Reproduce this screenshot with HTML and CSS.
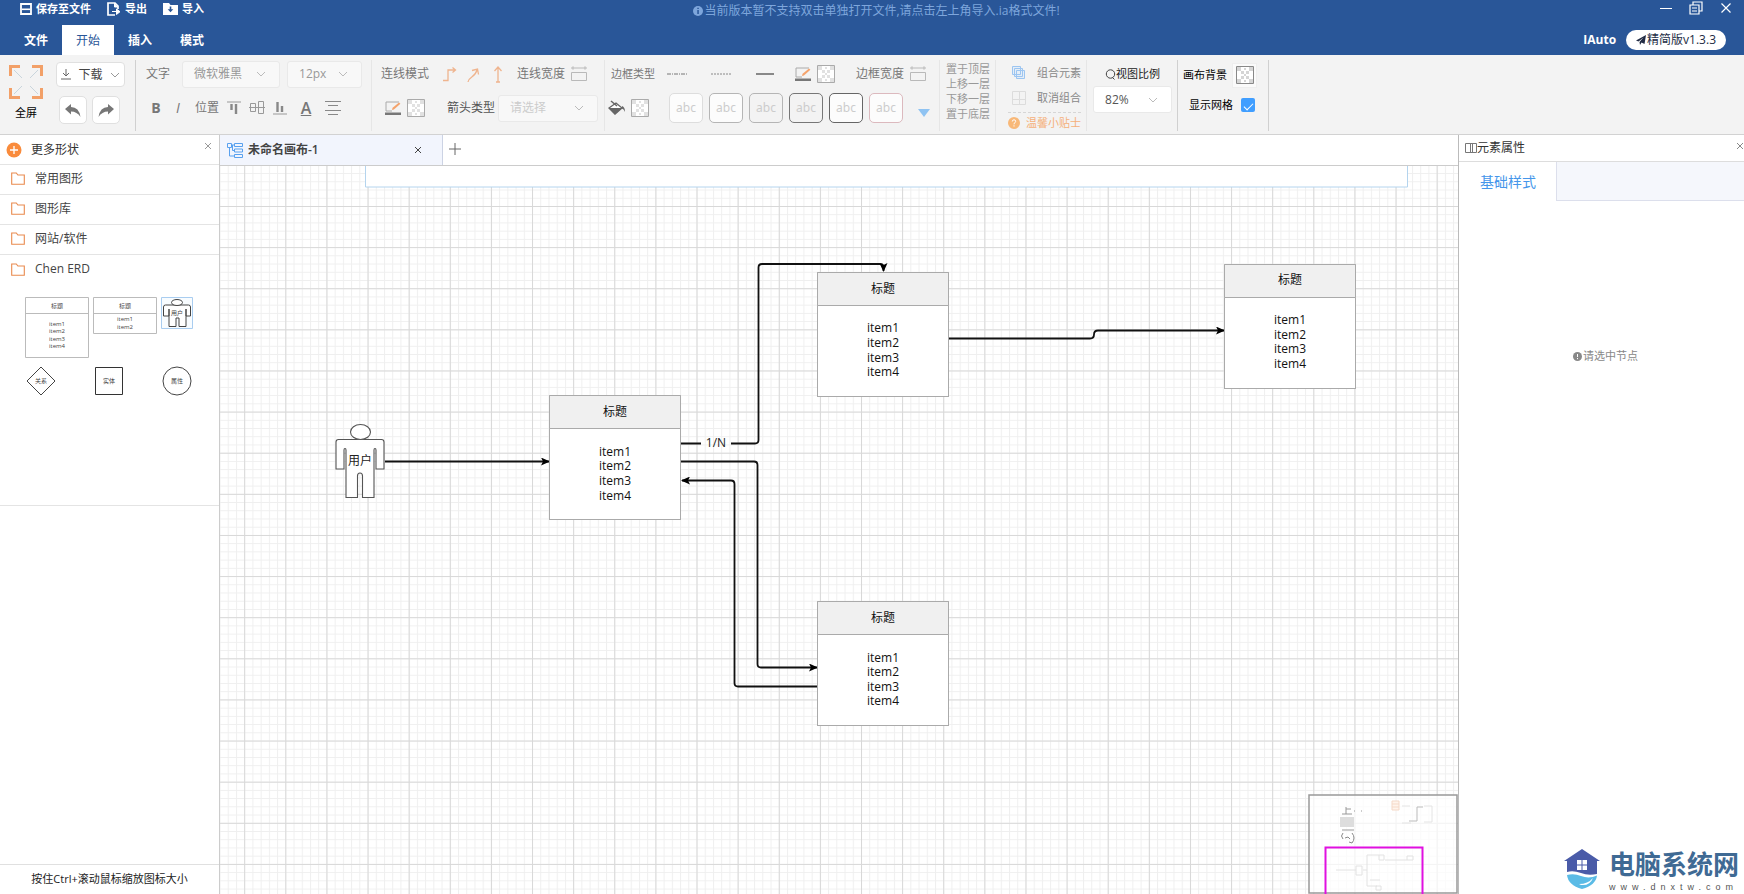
FILE: index.html
```html
<!DOCTYPE html>
<html lang="zh-CN">
<head>
<meta charset="utf-8">
<title>IAuto</title>
<link rel="stylesheet" href="styles.css">
</head>
<body>
<svg class="defs" aria-hidden="true">
  <symbol id="chevron" viewBox="0 0 10 6"><path d="M1 1l4 4 4-4" fill="none" stroke="currentColor"/></symbol>
  <symbol id="close" viewBox="0 0 8 8"><path d="M1 1l6 6M7 1L1 7" fill="none" stroke="currentColor"/></symbol>
  <symbol id="folder" viewBox="0 0 14 13"><path d="M.7 1h4.6l1.6 2h6.4v9.3H.7z" fill="none" stroke="#e98a4e" stroke-width="1.1"/></symbol>
  <symbol id="checker" viewBox="0 0 18 18"><path d="M.5.5h17v17H.5z" fill="#fff" stroke="currentColor"/><path d="M1 1h4v4H1zM13 1h4v4h-4zM5 5h3v3H5zM10 5h3v3h-3zM8 8h2v2H8zM5 10h3v3H5zM10 10h3v3h-3zM1 13h4v4H1zM13 13h4v4h-4zM8 2h2v2H8zM8 14h2v2H8z" fill="currentColor" opacity=".35"/></symbol>
  <symbol id="pen" viewBox="0 0 17 15"><path d="M14 1H1v9h6" fill="none" stroke="#aaa"/><path d="M7 9l.6-2.2L14 1.500l1.400 1.300-6.500 5.700z" fill="#f4a36c"/><path d="M0 11.500h16V14H0z" fill="#777"/></symbol>
  <symbol id="width" viewBox="0 0 18 16"><path d="M1 2h16M3 .3v3.400M15 .3v3.400M1.500 6.500h15v8h-15z" fill="none" stroke="#b9b9b9"/></symbol>
  <symbol id="person" viewBox="0 -9 50 76"><g fill="#fff" stroke="#555" stroke-width="1.1"><path d="M1 38V11q0-2.500 2.500-2.500h43q2.500 0 2.500 2.500v27h-8V19q0-1.500-1-1.500T39 19v47.500H27.500V45q0-3-2.500-3t-2.500 3v21.500H11V19q0-1.500-1-1.500T9 19v19z"/><ellipse cx="25.500" cy="1" rx="10" ry="7.500"/></g></symbol>
  <marker id="arrow" viewBox="0 0 9 8" refX="8" refY="4" markerWidth="9" markerHeight="8" markerUnits="userSpaceOnUse" orient="auto-start-reverse"><path d="M0 0l9 4-9 4 2-4z"/></marker>
</svg>

<header class="top">
  <div class="quick">
    <div class="quick-actions">
      <button class="quick-btn"><svg width="12" height="12" viewBox="0 0 12 12"><path d="M1 1h10v10H1z" fill="none" stroke="#fff" stroke-width="1.800"/><path d="M2 5.500h8v1.600H2z" fill="#fff"/></svg>保存至文件</button>
      <button class="quick-btn"><svg width="14" height="14" viewBox="0 0 14 14"><path d="M8 13H1V1h7l3 3v3" fill="none" stroke="#fff" stroke-width="1.700"/><path d="M7.500 1v4H11M5 9.500h6M9.500 7l3.500 2.700-3.500 2.800z" fill="#fff" stroke="#fff"/></svg>导出</button>
      <button class="quick-btn"><svg width="15" height="12" viewBox="0 0 15 12"><path d="M0 0h6l1.500 2H15v10H0z" fill="#fff"/><path d="M6.700 3.500h1.600v2.700h2L7.500 9.200 4.700 6.200h2z" fill="#295698"/></svg>导入</button>
    </div>
    <p class="notice"><svg width="10" height="10" viewBox="0 0 10 10"><circle cx="5" cy="5" r="5" fill="#7ea6dc"/><path d="M4.300 1.800h1.500v1.300H4.300zM4.300 4h1.500v4H4.300z" fill="#295698"/></svg>当前版本暂不支持双击单独打开文件,请点击左上角导入.ia格式文件!</p>
    <div class="window-btns">
      <button aria-label="最小化"><svg width="14" height="14" viewBox="0 0 14 14"><path d="M1 7.500h12" stroke="#fff"/></svg></button>
      <button aria-label="还原"><svg width="14" height="14" viewBox="0 0 14 14"><path d="M1 4h9v9H1zM4 4V1h9v9h-3M3 7h5M3 10h5" fill="none" stroke="#fff" stroke-width="1.200"/></svg></button>
      <button aria-label="关闭"><svg width="14" height="14" viewBox="0 0 14 14"><path d="M2.500 2.500l9 9M11.500 2.500l-9 9" stroke="#fff" stroke-width="1.200"/></svg></button>
    </div>
  </div>
  <div class="menu-row">
    <nav class="menu">
      <button>文件</button><button class="active">开始</button><button>插入</button><button>模式</button>
    </nav>
    <div class="brand"><b>IAuto</b>
      <span class="version"><svg width="10" height="10" viewBox="0 0 10 10"><path d="M0 5.500L10 0 8.500 9 5.500 7.500 4 10 3.500 7 7.500 2.500 2.500 6.500z" fill="#222c44"/></svg>精简版v1.3.3</span>
    </div>
  </div>
</header>

<section class="ribbon">
  <div class="group file-group">
    <button class="full"><svg width="34" height="34" viewBox="0 0 34 34"><path d="M1.500 11V1.500H11M23 1.500h9.500V11M1.500 23v9.500H11M32.500 23v9.500H23" fill="none" stroke="#f2a068" stroke-width="3"/><path d="M5 5l8 8M29 5l-8 8M5 29l8-8M29 29l-8-8" stroke="#c9d5dc"/></svg>全屏</button>
    <div class="col">
      <button class="box download"><svg width="10" height="11" viewBox="0 0 10 11"><path d="M5 0v7M2 4l3 3 3-3M0 10h10" fill="none" stroke="#666"/></svg>下载<svg class="chev" width="10" height="6"><use href="#chevron"/></svg></button>
      <div class="undo">
        <button class="box" aria-label="撤销"><svg width="16" height="13" viewBox="0 0 16 13"><path d="M0 5L6 0v3q8 0 9.500 10Q12 7.500 6 7.500v3z" fill="#777"/></svg></button>
        <button class="box" aria-label="重做"><svg width="16" height="13" viewBox="0 0 16 13"><path d="M16 5l-6-5v3Q2 3 .5 13 4 7.500 10 7.500v3z" fill="#777"/></svg></button>
      </div>
    </div>
  </div>

  <div class="group text-group faded">
    <div class="row">
      <label for="font">文字</label>
      <span class="select font"><select id="font"><option>微软雅黑</option></select><svg width="10" height="6"><use href="#chevron"/></svg></span>
      <span class="select size"><select aria-label="字号"><option>12px</option></select><svg width="10" height="6"><use href="#chevron"/></svg></span>
    </div>
    <div class="row tools">
      <button class="bold">B</button><button class="italic">I</button><span>位置</span>
      <button aria-label="顶部"><svg width="14" height="14" viewBox="0 0 14 14"><path d="M0 1h14" stroke="#999"/><path d="M4.500 3v6M9 3v10" stroke="#888" stroke-width="2.400"/></svg></button>
      <button aria-label="居中"><svg width="16" height="16" viewBox="0 0 16 16"><path d="M1.500 3.500h5v8h-5zM9.500 1.500h5v12h-5zM0 7.500h16" fill="none" stroke="#999"/></svg></button>
      <button aria-label="底部"><svg width="14" height="14" viewBox="0 0 14 14"><path d="M0 13h14" stroke="#999"/><path d="M4.500 1v10M9 5v6" stroke="#888" stroke-width="2.400"/></svg></button>
      <button class="color">A</button>
      <button aria-label="对齐"><svg width="16" height="16" viewBox="0 0 16 16"><path d="M0 1.500h16M3 5.500h10M0 10.500h16M3 14.500h10" stroke="#888"/></svg></button>
    </div>
  </div>

  <div class="group line-group faded">
    <div class="row">
      <span>连线模式</span>
      <div class="modes">
        <button aria-label="折线"><svg width="16" height="17" viewBox="0 0 16 17"><path d="M1 14.500h5V4h7M10.500 1.500L13.500 4l-3 2.500" fill="none" stroke="#efb48e" stroke-width="1.300"/></svg></button>
        <button aria-label="曲线"><svg width="16" height="17" viewBox="0 0 16 17"><path d="M2 16c1-6 7-4 9-12M6 4.500l5.500-1.500 1 5.500" fill="none" stroke="#efb48e" stroke-width="1.300"/></svg></button>
        <button aria-label="直线"><svg width="16" height="17" viewBox="0 0 16 17"><path d="M8 16V1M4.500 5L8 1l3.500 4M6 16h4" fill="none" stroke="#efb48e" stroke-width="1.300"/></svg></button>
      </div>
      <span>连线宽度</span>
      <svg class="w" width="18" height="16"><use href="#width"/></svg>
    </div>
    <div class="row">
      <button class="pen" aria-label="线条颜色"><svg width="17" height="15"><use href="#pen"/></svg></button>
      <button class="chk" aria-label="无颜色"><svg width="18" height="18"><use href="#checker"/></svg></button>
      <label for="arrowtype" class="dark">箭头类型</label>
      <span class="select arrow"><select id="arrowtype"><option>请选择</option></select><svg width="10" height="6"><use href="#chevron"/></svg></span>
    </div>
  </div>

  <div class="group border-group faded">
    <div class="row">
      <span class="small">边框类型</span>
      <div class="dashes">
        <button aria-label="虚线"><svg width="20" height="2"><path d="M0 1h20" stroke="#777" stroke-dasharray="4 1 1 1"/></svg></button>
        <button aria-label="点线"><svg width="20" height="2"><path d="M0 1h20" stroke="#888" stroke-dasharray="2 1"/></svg></button>
        <button aria-label="实线"><svg width="20" height="2"><path d="M1 1h18" stroke="#888" stroke-width="2"/></svg></button>
      </div>
      <button class="pen" aria-label="边框颜色"><svg width="17" height="15"><use href="#pen"/></svg></button>
      <button class="chk" aria-label="无颜色"><svg width="18" height="18"><use href="#checker"/></svg></button>
      <span class="bw">边框宽度</span>
      <svg class="w" width="18" height="16"><use href="#width"/></svg>
    </div>
    <div class="row">
      <button aria-label="填充"><svg width="18" height="16" viewBox="0 0 18 16"><path d="M1 8l7-5 6 5-7 6z" fill="#fff" stroke="#666" stroke-width="1.300"/><path d="M1 8h13l-7 6.500zM14 6q3 1 3 6-1-3-3-3.500z" fill="#666"/><path d="M3 1l6 5" stroke="#666" stroke-width="1.500"/></svg></button>
      <button class="chk" aria-label="无填充"><svg width="18" height="18"><use href="#checker"/></svg></button>
      <div class="presets">
        <button class="p1">abc</button><button class="p2">abc</button><button class="p3">abc</button><button class="p4">abc</button><button class="p5">abc</button><button class="p6">abc</button>
      </div>
      <button class="more" aria-label="更多样式"><svg width="12" height="8" viewBox="0 0 12 8"><path d="M0 0h12L6 8z" fill="#8fc3f2"/></svg></button>
    </div>
  </div>

  <div class="group layer-group">
    <button>置于顶层</button><button>上移一层</button><button>下移一层</button><button>置于底层</button>
  </div>

  <div class="group combine-group">
    <button><svg width="16" height="16" viewBox="0 0 16 16"><path d="M1.500 1.500h8v8h-8zM3.500 3.500h8v8h-8zM5.500 5.500h8v8h-8z" fill="#d8e9fb" fill-opacity=".5" stroke="#9cc5f1"/></svg>组合元素</button>
    <button><svg width="16" height="16" viewBox="0 0 16 16"><path d="M1.500 1.500h13v13h-13zM1.500 9.500h7v-8M8.500 9.500v5M8.500 9.500h6" fill="none" stroke="#dcdcdc"/></svg>取消组合</button>
    <button class="tip"><svg width="12" height="12" viewBox="0 0 12 12"><circle cx="6" cy="6" r="6" fill="#f8b878"/><path d="M4.300 4.500q0-1.700 1.700-1.700t1.700 1.500Q7.700 5.500 6 6.500v.8M6 8.300v1.200" fill="none" stroke="#fff"/></svg>温馨小贴士</button>
  </div>

  <div class="group zoom-group">
    <label for="zoom"><svg width="11" height="11" viewBox="0 0 11 11"><circle cx="5.500" cy="5" r="4.200" fill="none" stroke="#444"/><path d="M7.500 8.500l2 2" stroke="#444"/></svg>视图比例</label>
    <span class="select zoom"><select id="zoom"><option>82%</option></select><svg width="10" height="6"><use href="#chevron"/></svg></span>
  </div>

  <div class="group canvas-group">
    <div class="line"><span>画布背景</span><button class="bg" aria-label="画布背景"><svg width="18" height="18"><use href="#checker"/></svg></button></div>
    <div class="line"><label for="grid">显示网格</label><input id="grid" type="checkbox" checked></div>
  </div>
</section>

<main class="work">
  <aside class="shapes">
    <div class="shapes-head">
      <svg width="16" height="16" viewBox="0 0 16 16"><circle cx="8" cy="8" r="7.500" fill="#f98b3c"/><path d="M8 4v8M4 8h8" stroke="#fff" stroke-width="1.300"/></svg>
      <h2>更多形状</h2>
      <button aria-label="关闭"><svg width="8" height="8"><use href="#close"/></svg></button>
    </div>
    <button class="cat"><svg width="14" height="13"><use href="#folder"/></svg>常用图形</button>
    <button class="cat"><svg width="14" height="13"><use href="#folder"/></svg>图形库</button>
    <button class="cat"><svg width="14" height="13"><use href="#folder"/></svg>网站/软件</button>
    <button class="cat open"><svg width="14" height="13"><use href="#folder"/></svg>Chen ERD</button>
    <div class="thumbs">
      <svg width="64" height="61" viewBox="0 0 64 61"><path d="M.5.500h63v60H.5zM0 16.500h64" fill="#fff" stroke="#bbb"/><g class="mini"><text x="32" y="11">标题</text><text x="32" y="29">item1</text><text x="32" y="36">item2</text><text x="32" y="44">item3</text><text x="32" y="51">item4</text></g></svg>
      <svg width="64" height="37" viewBox="0 0 64 37"><path d="M.5.500h63v36H.5zM0 16.500h64" fill="#fff" stroke="#bbb"/><g class="mini"><text x="32" y="11">标题</text><text x="32" y="24">item1</text><text x="32" y="32">item2</text></g></svg>
      <svg width="32" height="32" viewBox="0 0 32 32"><path d="M.5.500h31v31H.5z" fill="#f8fcff" stroke="#a9cdf0"/><path d="M2.500 19V10q0-2 2-2h23q2 0 2 2v9h-4.500v-7v17.500h-7V21h-3v8.500H8V12v7z" fill="#fff" stroke="#444"/><ellipse cx="16" cy="5.500" rx="5.500" ry="3" fill="#fff" stroke="#444"/><text class="mini" x="16" y="18">用户</text></svg>
      <svg width="32" height="30" viewBox="0 0 32 30"><path d="M16 1l14 14-14 14L2 15z" fill="#fff" stroke="#444"/><text class="mini" x="16" y="17">关系</text></svg>
      <svg width="32" height="30" viewBox="0 0 32 30"><path d="M2.500 1.500h27v27h-27z" fill="#fff" stroke="#333"/><text class="mini" x="16" y="17">实体</text></svg>
      <svg width="32" height="30" viewBox="0 0 32 30"><circle cx="16" cy="15" r="14" fill="#fff" stroke="#444"/><text class="mini" x="16" y="17">属性</text></svg>
    </div>
    <p class="hint">按住Ctrl+滚动鼠标缩放图标大小</p>
  </aside>

  <section class="editor">
    <div class="tabs">
      <div class="tab">
        <svg width="16" height="15" viewBox="0 0 16 15"><path d="M.5.500h4v4h-4zM7.500.500h8v3h-8zM7.500 6h8v3h-8zM7.500 11.500h8v3h-8zM4.500 2h3M2.500 4.500V13h5M5.500 7.500h2M5.500 2v5.500" fill="none" stroke="#59a1ef"/></svg>
        <span>未命名画布-1</span>
        <button aria-label="关闭画布"><svg width="8" height="8"><use href="#close"/></svg></button>
      </div>
      <button class="add" aria-label="新建画布"><svg width="12" height="12" viewBox="0 0 12 12"><path d="M6 0v12M0 6h12" stroke="#666"/></svg></button>
    </div>
    <div class="canvas">
      <svg class="board" width="100%" height="100%">
        <defs>
          <pattern id="minor" width="8.224" height="8.224" patternUnits="userSpaceOnUse" x="24.200" y="40"><path d="M0 .5h8.224M.5 0v8.224" stroke="#efefef"/></pattern>
          <pattern id="major" width="41.120" height="41.120" patternUnits="userSpaceOnUse" x="24.200" y="40"><path d="M0 .5h41.120M.5 0v41.120" stroke="#d8d8d8"/></pattern>
        </defs>
        <rect width="100%" height="100%" fill="url(#minor)"/>
        <rect width="100%" height="100%" fill="url(#major)"/>
        <path d="M145.500-2v23h1042V-2z" fill="#fff" stroke="#b4d4ee"/>
        <g class="edges">
          <path d="M165 295.500H329" marker-end="url(#arrow)"/>
          <path d="M461 277.500H481M511 277.500H535q3.500 0 3.500-3.500V101.500q0-3.500 3.500-3.500H660q3.500 0 3.500 3.500V105" marker-end="url(#arrow)"/>
          <path d="M461 295.500H534q3.500 0 3.500 3.500V498q0 3.500 3.500 3.500H597" marker-end="url(#arrow)"/>
          <path d="M597 520.500H518q-3.500 0-3.500-3.500V318q0-3.500-3.500-3.500H462" marker-end="url(#arrow)"/>
          <path d="M729 172.500H870q4 0 4-4t4-4H1004" marker-end="url(#arrow)"/>
        </g>
        <text class="label" x="496" y="281">1/N</text>
        <use href="#person" x="115" y="256" width="50" height="76"/>
        <text class="label" x="140" y="299">用户</text>
        <g class="node" transform="translate(329 229)"><rect x=".5" y=".5" width="131" height="124"/><path d="M.5.500h131v33H.5z"/><text x="66" y="21">标题</text><text x="66" y="61">item1</text><text x="66" y="75">item2</text><text x="66" y="90">item3</text><text x="66" y="105">item4</text></g>
        <g class="node" transform="translate(597 106)"><rect x=".5" y=".5" width="131" height="124"/><path d="M.5.500h131v33H.5z"/><text x="66" y="21">标题</text><text x="66" y="60">item1</text><text x="66" y="75">item2</text><text x="66" y="90">item3</text><text x="66" y="104">item4</text></g>
        <g class="node" transform="translate(1004 98)"><rect x=".5" y=".5" width="131" height="124"/><path d="M.5.500h131v33H.5z"/><text x="66" y="20">标题</text><text x="66" y="60">item1</text><text x="66" y="75">item2</text><text x="66" y="89">item3</text><text x="66" y="104">item4</text></g>
        <g class="node" transform="translate(597 435)"><rect x=".5" y=".5" width="131" height="124"/><path d="M.5.500h131v33H.5z"/><text x="66" y="21">标题</text><text x="66" y="61">item1</text><text x="66" y="75">item2</text><text x="66" y="90">item3</text><text x="66" y="104">item4</text></g>
      </svg>
      <svg class="minimap" width="150" height="100" viewBox="0 0 150 100">
        <path d="M1 1h148v98H1z" fill="#fff" fill-opacity=".7" stroke="#999" stroke-width="1.500"/>
        <path d="M38 13v7M38 15h5M34 20h10M46 17h1M53 17h1M34 36h12" fill="none" stroke="#999"/>
        <path d="M32 23h14v10H32z" fill="#ddd"/>
        <path d="M35 39q-3 3 0 6M44 39q4 5 0 10l-3-1M37 44l3-1 2 2" fill="none" stroke="#888"/>
        <path d="M84 7h7v9h-7zM84 10h7M84 13h7" fill="#fff4ec" stroke="#f5d9c8"/>
        <path d="M101 27h8V13h6" fill="none" stroke="#bbb"/>
        <path d="M94 12h8M116 12h8v16h-8M94 29h9" fill="none" stroke="#e4e4e4"/>
        <path d="M17.500 100V53.500h97V100" fill="none" stroke="#e010e0" stroke-width="2"/>
        <path d="M28 76h20M55 76h4v16h10M59 76V61h12M77 66h22M62 86h10M48 72h6v9h-6zM71 61h5v5h-5zM99 62h6v4h-6zM68 92h5v4h-5z" fill="none" stroke="#e2e2e2"/>
      </svg>
    </div>
  </section>

  <aside class="props">
    <div class="props-head"><svg width="12" height="10" viewBox="0 0 12 10"><path d="M.5.500h11v9H.5zM5.500 0v10M7.500 0v10" fill="none" stroke="#777"/></svg><h2>元素属性</h2><button aria-label="关闭"><svg width="8" height="8"><use href="#close"/></svg></button></div>
    <div class="props-tabs"><button>基础样式</button></div>
    <p class="empty"><svg width="9" height="9" viewBox="0 0 9 9"><circle cx="4.500" cy="4.500" r="4.500" fill="#888"/><path d="M4.500 2v3M4.500 6v1.200" stroke="#fff"/></svg>请选中节点</p>
    <div class="mark">
      <svg width="36" height="42" viewBox="0 0 36 42"><path d="M18 1L36 13h-3v13q-9 2-16-1-8-3-14-1V13H0z" fill="#4a5ba8"/><path d="M13 12h4.500v4.500H13zM18.500 12H23v4.500h-4.500zM13 17.500h4.500V22H13zM18.500 17.500H23V22h-4.500z" fill="#fff"/><path d="M3 27q7-2 14 1 8 3 16-.5Q32 37 18 41 4 37 3 27z" fill="#5bbbe6"/><path d="M15 36q9 0 14-6-3 8-12 7z" fill="#fff"/></svg>
      <div><strong>电脑系统网</strong><span>www.dnxtw.com</span></div>
    </div>
  </aside>
</main>
</body>
</html>
```
FILE: styles.css
```css
* { box-sizing: border-box; }
body, h2, p { margin: 0; }
body {
  display: flex;
  flex-direction: column;
  height: 100vh;
  overflow: hidden;
  font: 12px/16px "Open Sans", "Noto Sans CJK SC", sans-serif;
  color: #333;
  background: #fff;
}
button, select, input { font: inherit; color: inherit; margin: 0; }
button { display: flex; align-items: center; justify-content: center; padding: 0; border: 0; background: none; white-space: nowrap; }
h2 { font-size: 12px; font-weight: 400; }
svg { flex: none; display: block; }
.defs { position: absolute; width: 0; height: 0; }

.top { flex: none; background: #295698; color: #fff; }
.quick { display: grid; grid-template-columns: 1fr auto 1fr; height: 25px; padding: 0 11px 0 20px; }
.quick-actions { display: flex; gap: 16px; height: 17px; align-items: center; }
.quick-btn { gap: 4px; font-size: 11px; font-weight: 600; }
.notice { display: flex; align-items: center; gap: 1px; height: 21px; color: #7ea6dc; }
.window-btns { display: flex; justify-content: flex-end; gap: 16px; height: 16px; }
.menu-row { display: flex; justify-content: space-between; height: 30px; padding: 0 18px 0 10px; }
.menu { display: flex; }
.menu button { padding: 2px 14px 0; font-weight: 600; }
.menu .active { background: #fff; color: #295698; font-weight: 400; }
.brand { display: flex; align-items: center; gap: 10px; }
.version { display: flex; align-items: center; gap: 1px; height: 20px; padding: 0 10px; border-radius: 10px; background: #fff; color: #222c44; }

.ribbon { flex: none; display: flex; height: 80px; padding: 5px 0 3px; background: #f3f3f3; border-bottom: 1px solid #d2d2d2; overflow: hidden; }
.group { border-right: 1px solid #e6e6e6; flex: none; }
.row { display: flex; align-items: center; height: 28px; }
.row + .row { margin-top: 6px; }
.faded { color: #777; }
.small { font-size: 11px; }
.box { background: #fff; border: 1px solid #e0e0e0; border-radius: 4px; }
.select { display: grid; grid-template-columns: 1fr 24px; align-items: center; height: 27px; }
.select select { grid-area: 1 / 1 / 2 / 3; width: 100%; height: 100%; padding: 0 11px; border: 1px solid #e9e9e9; border-radius: 3px; background: #f8f8f8; appearance: none; color: #999; }
.select svg { grid-area: 1 / 2; color: #bbb; pointer-events: none; }

.file-group { display: flex; gap: 13px; padding: 0 10px 0 9px; border-color: #d0d0d0; }
.full { flex-direction: column; gap: 6px; height: 62px; padding-top: 4px; font-size: 11px; color: #000; }
.col { display: flex; flex-direction: column; gap: 9px; padding-top: 2px; }
.download { gap: 7px; width: 69px; height: 25px; color: #444; }
.chev { color: #999; }
.undo { display: flex; gap: 5px; padding-left: 3px; }
.undo .box { width: 28px; height: 28px; border-radius: 5px; }

.text-group { padding: 0 9px 0 10px; }
.font { width: 98px; margin: 0 7px 0 12px; }
.size { width: 75px; }
.tools { gap: 8px; padding-left: 5px; }
.bold { width: 10px; font-size: 14px; font-weight: 700; }
.italic { width: 18px; font-size: 14px; font-style: italic; }
.color { width: 22px; font-size: 16px; font-weight: 600; text-decoration: underline; }

.line-group { padding: 0 6px 0 9px; }
.modes { display: flex; gap: 8px; margin: 0 11px 0 13px; }
.w { margin-left: 5px; }
.pen { margin-left: 4px; }
.chk { margin-left: 5px; color: #aaa; }
.dark { margin-left: 22px; color: #555; }
.arrow { width: 100px; margin-left: 3px; }
.arrow select { color: #ccc; }

.border-group { padding: 0 9px 0 3px; }
.border-group .small { margin-left: 3px; }
.dashes { display: flex; gap: 24px; margin: 0 16px 0 12px; }
.bw { margin-left: 21px; }
.presets { display: flex; gap: 6px; margin: 0 15px 0 20px; }
.presets button { width: 34px; height: 30px; border: 1px solid #ddd; border-radius: 5px; background: #fcfcfc; color: #ccc; font-family: "Noto Sans", sans-serif; }
.presets .p2 { border-color: #b5b5b5; }
.presets .p3 { border-color: #b5b5b5; background: #f3f3f3; }
.presets .p4 { border-color: #777; background: #f3f3f3; }
.presets .p5 { border-color: #666; }
.presets .p6 { border-color: #dcb9be; }
.more { height: 12px; margin-top: 10px; }

.layer-group { display: flex; flex-direction: column; padding: 1px 5px 0 6px; color: #999; font-size: 11px; line-height: 15px; }
.combine-group { display: flex; flex-direction: column; padding: 0 5px 0 12px; font-size: 11px; color: #888; }
.combine-group button { flex: none; justify-content: space-between; gap: 8px; height: 25px; padding-left: 3px; }
.combine-group .tip { gap: 6px; height: 20px; padding: 0; border-top: 1px dashed #d6d6d6; color: #f5b07a; margin-top: 2px; }
.zoom-group { display: flex; flex-direction: column; align-items: center; gap: 4px; padding: 6px 5px 0 6px; border-color: #d0d0d0; font-size: 11px; color: #222; }
.zoom-group label { display: flex; align-items: center; }
.zoom { width: 79px; font-size: 12px; }
.zoom select { background: #fff; color: #555; }
.canvas-group { display: flex; flex-direction: column; align-items: flex-end; gap: 4px; padding: 2px 11px 0 5px; border-color: #d0d0d0; font-size: 11px; color: #000; }
.line { display: flex; align-items: center; gap: 5px; height: 26px; }
.bg { width: 25px; height: 25px; border: 1px solid #eee; background: #fafafa; color: #888; }
.line + .line { gap: 8px; padding-right: 2px; }
.line input { appearance: none; width: 14px; height: 14px; border-radius: 2px; background: #409eff; display: grid; place-items: center; }
.line input::before { content: ""; width: 8px; height: 4px; border: solid #fff; border-width: 0 0 1px 1px; transform: rotate(-45deg); }

.work { flex: 1; min-height: 0; display: grid; grid-template-columns: 220px 1fr 286px; }
.shapes { display: flex; flex-direction: column; border-right: 1px solid #ccc; min-height: 0; }
.shapes-head { display: flex; align-items: center; gap: 9px; height: 30px; padding: 0 7px 0 6px; border-bottom: 1px solid #e4e4e4; }
.shapes-head h2 { flex: 1; }
.shapes-head button { color: #999; height: 16px; margin-bottom: 8px; }
.cat { justify-content: flex-start; gap: 10px; height: 30px; padding: 0 0 2px 11px; border-bottom: 1px solid #e4e4e4; color: #444; }
.cat.open { border-bottom: 0; }
.thumbs { display: grid; grid-template-columns: 68px 68px 32px; grid-template-rows: 61px 30px; row-gap: 8px; padding: 12px 0 109px 25px; border-bottom: 1px solid #e4e4e4; }
.mini { font-size: 6px; text-anchor: middle; fill: #444; }
.hint { margin-top: auto; height: 30px; border-top: 1px solid #e0e0e0; font-size: 11px; line-height: 28px; text-align: center; color: #222; }

.editor { display: flex; flex-direction: column; min-width: 0; min-height: 0; }
.tabs { display: flex; height: 31px; border-bottom: 1px solid #ccc; }
.tab { display: flex; align-items: center; gap: 5px; width: 223px; padding: 0 20px 0 7px; background: #f2f5fd; border-right: 1px solid #ccd3e4; font-weight: 600; color: #444; }
.tab span { flex: 1; }
.add { width: 24px; height: 28px; }
.canvas { position: relative; flex: 1; min-height: 0; overflow: hidden; }
.board { position: absolute; inset: 0; }
.minimap { position: absolute; right: 0; bottom: 0; }
.edges path { fill: none; stroke: #111; stroke-width: 1.8px; }
.label { text-anchor: middle; fill: #222; }
.node rect { fill: #fff; stroke: #aaa; }
.node path { fill: #f0f0f0; stroke: #aaa; }
.node text { text-anchor: middle; fill: #111; }

.props { display: flex; flex-direction: column; min-width: 0; overflow: hidden; border-left: 1px solid #bbb; }
.props-head { display: flex; align-items: center; height: 27px; padding-left: 6px; border-bottom: 1px solid #ddd; }
.props-head h2 { flex: 1; }
.props-head button { color: #888; padding-bottom: 4px; }
.props-tabs { display: flex; height: 39px; background: #f5f7fc; border-bottom: 1px solid #dcdfec; }
.props-tabs button { height: 39px; padding: 0 20px 0 21px; background: #fff; border-right: 1px solid #dcdfec; font-size: 14px; color: #4596ea; }
.empty { display: flex; align-items: center; justify-content: center; gap: 1px; margin-top: 147px; padding-left: 8px; font-size: 11px; color: #888; }
.mark { display: flex; align-items: center; justify-content: flex-end; gap: 9px; margin-top: auto; padding: 0 5px 1px 0; color: #3f6a94; }
.mark strong, .mark span { display: block; }
.mark strong { font: 700 26px/38px "Noto Sans CJK SC", sans-serif; }
.mark span { font: 9px/11px "Liberation Sans", sans-serif; letter-spacing: 5px; color: #555; }
```
